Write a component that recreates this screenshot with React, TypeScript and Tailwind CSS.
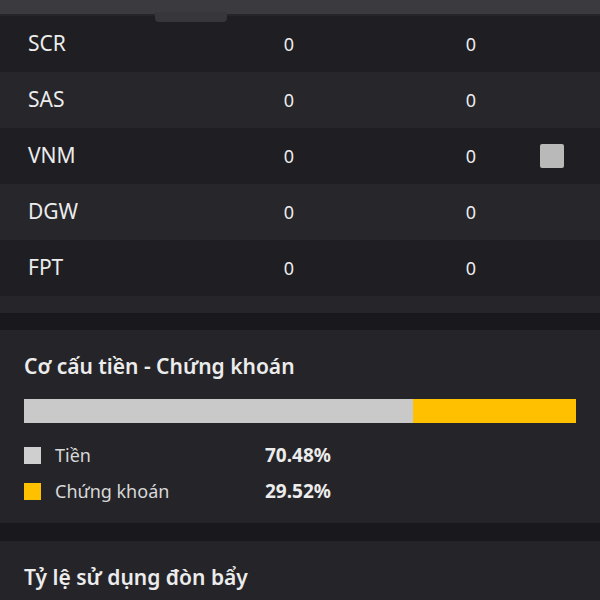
import React from 'react'

const rows = [
  { code: 'SCR', a: '0', b: '0', checked: false },
  { code: 'SAS', a: '0', b: '0', checked: false },
  { code: 'VNM', a: '0', b: '0', checked: true },
  { code: 'DGW', a: '0', b: '0', checked: false },
  { code: 'FPT', a: '0', b: '0', checked: false },
]

const cash = 70.48
const stock = 29.52

export default function App() {
  return (
    <div
      className="flex h-[600px] w-[600px] flex-col overflow-hidden bg-[#19191d] text-[#ececec]"
      style={{ fontFamily: '"Noto Sans", "Open Sans", sans-serif' }}
    >
      {/* header strip of the table */}
      <div className="relative h-[14px] shrink-0 bg-[#3a3a3f]">
        <div className="absolute left-[155px] top-[12px] h-[10px] w-[72px] rounded-b-sm bg-[#36363b]" />
      </div>

      <div className="shrink-0 bg-[#25252a] pt-[2px]">
        {rows.map((row, i) => (
          <div
            key={row.code}
            className={[
              'grid h-[56px] grid-cols-[230px_118px_1fr_102px_78px] items-center',
              i % 2 === 0 ? 'bg-[#1f1f23]' : 'bg-[#26262b]',
            ].join(' ')}
          >
            <span className="pl-[28px] text-[21px]">{row.code}</span>
            <span className="text-center text-[18px]">{row.a}</span>
            <span />
            <span className="text-center text-[18px]">{row.b}</span>
            <span className="flex items-center pl-[18px]">
              {row.checked && <span className="h-[24px] w-[24px] rounded-[2px] bg-[#b9b9b9]" />}
            </span>
          </div>
        ))}
        <div className="h-[17px]" />
      </div>

      <div className="h-[17px] shrink-0" />

      <section className="shrink-0 bg-[#252529] px-[24px] pb-[14px] pt-[22px]">
        <h2 className="text-[21px] font-semibold leading-[28px]">Cơ cấu tiền - Chứng khoán</h2>
        <div className="mt-[19px] flex h-[24px] w-full">
          <div className="bg-[#c9c9c9]" style={{ width: `${cash}%` }} />
          <div className="bg-[#ffc000]" style={{ width: `${stock}%` }} />
        </div>
        <div className="mt-[14px] flex flex-col">
          <div className="flex h-[36px] items-center">
            <span className="h-[17px] w-[17px] bg-[#cfcfcf]" />
            <span className="ml-[14px] w-[210px] text-[18px] text-[#d8d8d8]">Tiền</span>
            <span className="text-[19px] font-bold">{cash.toFixed(2)}%</span>
          </div>
          <div className="flex h-[36px] items-center">
            <span className="h-[17px] w-[17px] bg-[#ffc000]" />
            <span className="ml-[14px] w-[210px] text-[18px] text-[#d8d8d8]">Chứng khoán</span>
            <span className="text-[19px] font-bold">{stock.toFixed(2)}%</span>
          </div>
        </div>
      </section>

      <div className="h-[18px] shrink-0" />

      <section className="flex-1 bg-[#252529] px-[24px] pt-[22px]">
        <h2 className="text-[21px] font-semibold leading-[28px]">Tỷ lệ sử dụng đòn bẩy</h2>
      </section>
    </div>
  )
}
